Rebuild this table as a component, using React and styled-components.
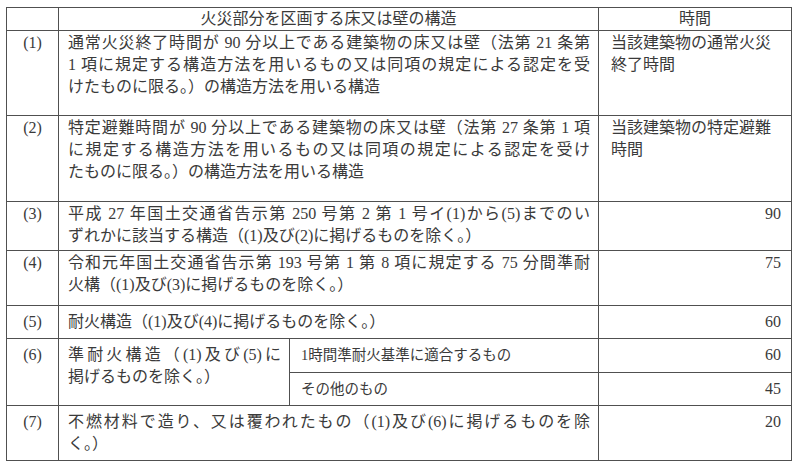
import React from 'react';
import styled, { createGlobalStyle } from 'styled-components';

const GlobalStyle = createGlobalStyle`
  html, body {
    margin: 0;
    padding: 0;
    background: #ffffff;
  }
  body {
    font-family: "Liberation Serif", "Noto Sans CJK JP", serif;
    color: #3a3a3a;
  }
`;

const Page = styled.div`
  padding: 7px 0 0 6px;
`;

const Table = styled.div`
  display: grid;
  grid-template-columns: 52px 231px 309px 193px;
  grid-template-rows: 23px 85px 86px 49px 55px 33px 34px 33px 55px;
  width: max-content;
  border-top: 1px solid #505050;
  border-left: 1px solid #505050;
`;

const Cell = styled.div`
  box-sizing: border-box;
  border-right: 1px solid #505050;
  border-bottom: 1px solid #505050;
  font-size: 16px;
  line-height: 22px;
  padding: ${(p) => (p.$head ? '0' : '1px 8px 0 9px')};
  grid-column: ${(p) => p.$col || 'auto'};
  grid-row: ${(p) => p.$row || 'auto'};
  text-align: ${(p) => p.$align || 'left'};
  ${(p) => p.$mid && 'padding-top: 5px;'}
`;

const NumCell = styled(Cell)`
  text-align: center;
  padding-left: 0;
  padding-right: 0;
`;

const TimeCell = styled(Cell)`
  padding-left: 12px;
  padding-right: 10px;
`;

const SubCell = styled(Cell)`
  font-size: 14.5px;
  padding-left: 11px;
`;

const Line = styled.div`
  text-align: ${(p) => (p.$full ? 'justify' : 'left')};
  text-align-last: ${(p) => (p.$full ? 'justify' : 'auto')};
`;

const rows = [
  {
    no: '(1)',
    lines: [
      '通常火災終了時間が 90 分以上である建築物の床又は壁（法第 21 条第',
      '1 項に規定する構造方法を用いるもの又は同項の規定による認定を受',
      'けたものに限る。）の構造方法を用いる構造',
    ],
    time: ['当該建築物の通常火災', '終了時間'],
    row: '2',
  },
  {
    no: '(2)',
    lines: [
      '特定避難時間が 90 分以上である建築物の床又は壁（法第 27 条第 1 項',
      'に規定する構造方法を用いるもの又は同項の規定による認定を受け',
      'たものに限る。）の構造方法を用いる構造',
    ],
    time: ['当該建築物の特定避難', '時間'],
    row: '3',
  },
  {
    no: '(3)',
    lines: [
      '平成 27 年国土交通省告示第 250 号第 2 第 1 号イ(1)から(5)までのい',
      'ずれかに該当する構造（(1)及び(2)に掲げるものを除く。）',
    ],
    value: '90',
    row: '4',
  },
  {
    no: '(4)',
    lines: [
      '令和元年国土交通省告示第 193 号第 1 第 8 項に規定する 75 分間準耐',
      '火構（(1)及び(3)に掲げるものを除く。）',
    ],
    value: '75',
    row: '5',
  },
  {
    no: '(5)',
    lines: ['耐火構造（(1)及び(4)に掲げるものを除く。）'],
    value: '60',
    row: '6',
    mid: true,
  },
];

function TextLines({ lines }) {
  return lines.map((l, i) => (
    <Line key={i} $full={i < lines.length - 1}>
      {l}
    </Line>
  ));
}

export default function App() {
  return (
    <Page>
      <GlobalStyle />
      <Table>
        <Cell $head $col="1" $row="1" />
        <Cell $head $col="2 / 4" $row="1" $align="center">
          火災部分を区画する床又は壁の構造
        </Cell>
        <Cell $head $col="4" $row="1" $align="center">
          時間
        </Cell>

        {rows.map((r) => (
          <React.Fragment key={r.no}>
            <NumCell $col="1" $row={r.row} $mid={r.mid}>
              {r.no}
            </NumCell>
            <Cell $col="2 / 4" $row={r.row} $mid={r.mid}>
              <TextLines lines={r.lines} />
            </Cell>
            {r.time ? (
              <TimeCell $col="4" $row={r.row}>
                {r.time.map((t) => (
                  <Line key={t}>{t}</Line>
                ))}
              </TimeCell>
            ) : (
              <TimeCell $col="4" $row={r.row} $align="right" $mid={r.mid}>
                {r.value}
              </TimeCell>
            )}
          </React.Fragment>
        ))}

        <NumCell $col="1" $row="7 / 9" $mid>
          (6)
        </NumCell>
        <Cell $col="2" $row="7 / 9" $mid>
          <Line $full>準耐火構造（(1)及び(5)に</Line>
          <Line>掲げるものを除く。）</Line>
        </Cell>
        <SubCell $col="3" $row="7" $mid>
          1時間準耐火基準に適合するもの
        </SubCell>
        <TimeCell $col="4" $row="7" $align="right" $mid>
          60
        </TimeCell>
        <SubCell $col="3" $row="8" $mid>
          その他のもの
        </SubCell>
        <TimeCell $col="4" $row="8" $align="right" $mid>
          45
        </TimeCell>

        <NumCell $col="1" $row="9" $mid>
          (7)
        </NumCell>
        <Cell $col="2 / 4" $row="9" $mid>
          <TextLines
            lines={[
              '不燃材料で造り、又は覆われたもの（(1)及び(6)に掲げるものを除',
              'く。）',
            ]}
          />
        </Cell>
        <TimeCell $col="4" $row="9" $align="right" $mid>
          20
        </TimeCell>
      </Table>
    </Page>
  );
}
